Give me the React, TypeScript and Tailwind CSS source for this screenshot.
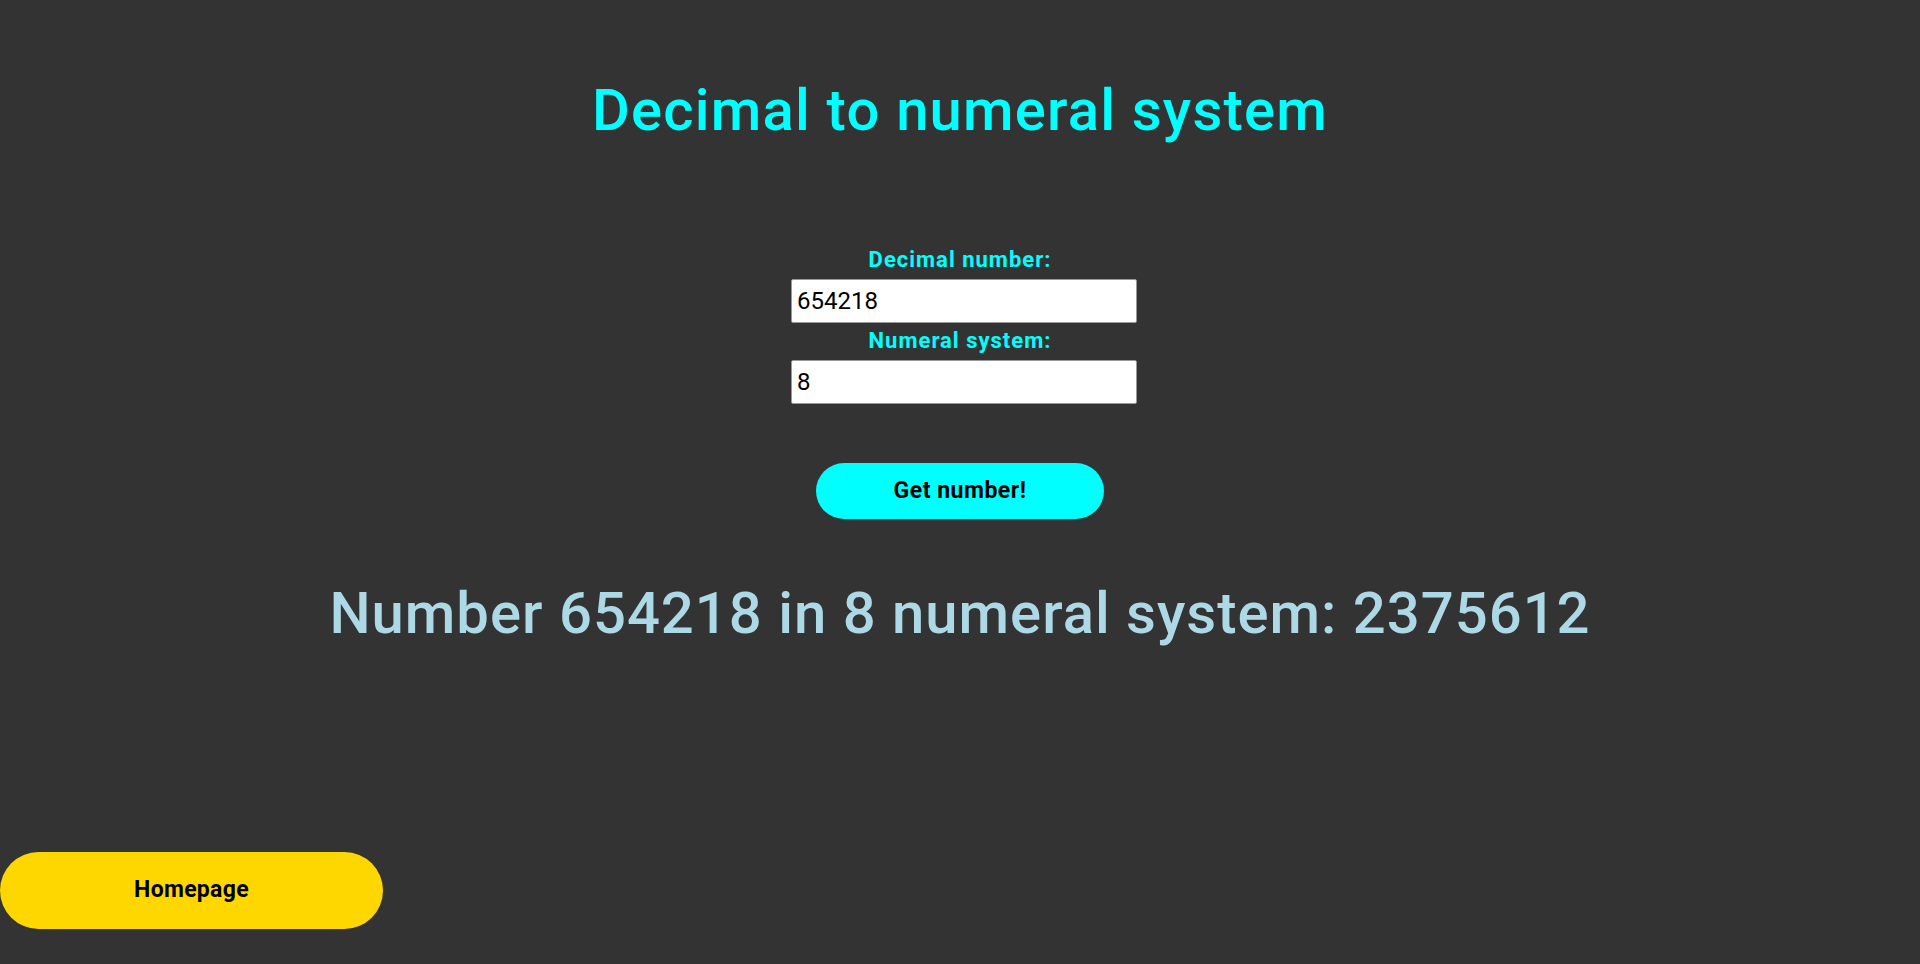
import React, { useState } from "react";

const App = () => {
  const [decimal, setDecimal] = useState<string>("654218");
  const [system, setSystem] = useState<string>("8");
  const [result, setResult] = useState<string>("2375612");

  const getNumber = () => {
    const n = parseInt(decimal, 10);
    const b = parseInt(system, 10);
    if (isNaN(n) || isNaN(b) || b < 2 || b > 36) {
      setResult("");
      return;
    }
    setResult(n.toString(b).toUpperCase());
  };

  return (
    <div
      className="flex h-screen flex-col bg-[#333333]"
      style={{ fontFamily: "Roboto, 'Liberation Sans', sans-serif" }}
    >
      <h1 className="mt-[78px] text-center text-[58px] font-medium leading-[64px] tracking-[1.2px] text-[#00ffff]">
        Decimal to numeral system
      </h1>

      <div className="mt-[106px] flex flex-col items-center">
        <label className="text-[22px] font-bold leading-[24px] tracking-[1px] text-[#00ffff]">
          Decimal number:
        </label>
        <input
          type="text"
          value={decimal}
          onChange={(e) => setDecimal(e.target.value)}
          className="mt-[7px] ml-[8px] h-[44px] w-[346px] rounded-[2px] border border-[#999] bg-white pl-[5px] text-[24px] text-black outline-none"
        />
        <label className="mt-[6px] text-[22px] font-bold leading-[24px] tracking-[1px] text-[#00ffff]">
          Numeral system:
        </label>
        <input
          type="text"
          value={system}
          onChange={(e) => setSystem(e.target.value)}
          className="mt-[7px] ml-[8px] h-[44px] w-[346px] rounded-[2px] border border-[#999] bg-white pl-[5px] text-[24px] text-black outline-none"
        />

        <button
          onClick={getNumber}
          className="mt-[59px] h-[56px] w-[288px] cursor-pointer rounded-full bg-[#00ffff] text-[23px] font-bold tracking-[0.5px] text-black"
        >
          Get number!
        </button>
      </div>

      <p className="mt-[62px] text-center text-[58px] font-medium leading-[64px] tracking-[1px] text-[#add8e6]">
        {`Number ${decimal} in ${system} numeral system: ${result}`}
      </p>

      <div className="mt-auto mb-[35px]">
        <button className="h-[77px] w-[383px] cursor-pointer rounded-full bg-[#ffd700] text-[23px] font-bold tracking-[0.3px] text-black">
          Homepage
        </button>
      </div>
    </div>
  );
};

export default App;
